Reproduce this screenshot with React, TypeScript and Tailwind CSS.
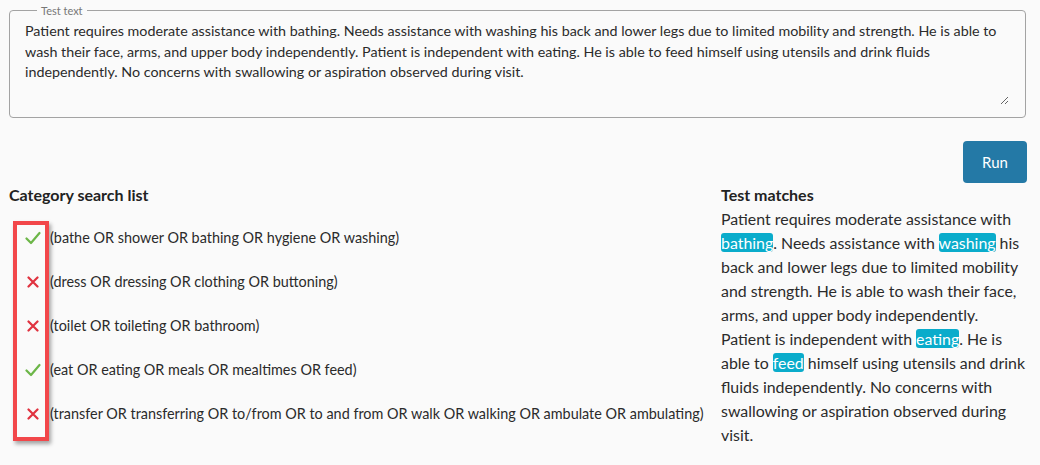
import { useState } from "react";

const SAMPLE =
  "Patient requires moderate assistance with bathing. Needs assistance with washing his back and lower legs due to limited mobility and strength. He is able to wash their face, arms, and upper body independently. Patient is independent with eating. He is able to feed himself using utensils and drink fluids independently. No concerns with swallowing or aspiration observed during visit.";

const categories = [
  { query: "(bathe OR shower OR bathing OR hygiene OR washing)", matched: true },
  { query: "(dress OR dressing OR clothing OR buttoning)", matched: false },
  { query: "(toilet OR toileting OR bathroom)", matched: false },
  { query: "(eat OR eating OR meals OR mealtimes OR feed)", matched: true },
  {
    query:
      "(transfer OR transferring OR to/from OR to and from OR walk OR walking OR ambulate OR ambulating)",
    matched: false,
  },
];

const highlightWords = ["bathing", "washing", "eating", "feed"];

function CheckIcon() {
  return (
    <svg width="16" height="14" viewBox="0 0 16 14" fill="none">
      <path d="M1.5 7.5 L6 12 L14.5 2" stroke="#6cb648" strokeWidth="2.2" strokeLinecap="round" strokeLinejoin="round" />
    </svg>
  );
}

function CrossIcon() {
  return (
    <svg width="12" height="12" viewBox="0 0 12 12" fill="none">
      <path d="M1.5 1.5 L10.5 10.5 M10.5 1.5 L1.5 10.5" stroke="#e0323f" strokeWidth="2.2" strokeLinecap="round" />
    </svg>
  );
}

function Highlighted({ text }: { text: string }) {
  // split on whole words that were matched
  const re = new RegExp(`\\b(${highlightWords.join("|")})\\b`, "g");
  const parts = text.split(re);
  return (
    <>
      {parts.map((part, i) =>
        highlightWords.includes(part) ? (
          <mark key={i} className="bg-[#0aaccb] text-white rounded-[3px]">
            {part}
          </mark>
        ) : (
          <span key={i}>{part}</span>
        )
      )}
    </>
  );
}

export default function App() {
  const [text, setText] = useState(SAMPLE);

  return (
    <div
      className="min-h-[465px] bg-[#fafafa] text-[#2b2b2b] pl-[9px] pr-[14px] pt-[4px]"
      style={{ fontFamily: "Lato, 'Open Sans', sans-serif" }}
    >
      {/* Test text input */}
      <fieldset className="rounded-[4px] border border-[#a3a3a3] pl-[15px] pr-[16px] pb-[12px]">
        <legend className="ml-[12px] px-[4px] text-[11px] leading-[13px] text-[#777]">Test text</legend>
        <textarea
          value={text}
          onChange={(e) => setText(e.target.value)}
          className="block w-full h-[84px] mt-[4px] resize-y bg-transparent outline-none text-[14.3px] leading-[20.5px] text-[#2b2b2b]"
        />
      </fieldset>

      <div className="flex justify-end mt-[23px]">
        <button className="w-[64px] h-[42px] mr-[-1px] rounded-[4px] bg-[#2479a6] text-white text-[15px]">Run</button>
      </div>

      <div className="flex">
        {/* Category list */}
        <div className="w-[712px] shrink-0">
          <h3 className="font-bold text-[16px] leading-[24px] text-[#222]">Category search list</h3>
          <div className="relative pt-[9px]">
            <ul>
              {categories.map((c) => (
                <li key={c.query} className="flex items-center h-[44px] text-[14.4px]">
                  <span className="w-[16px] ml-[16px] mr-[9px] flex justify-center">
                    {c.matched ? <CheckIcon /> : <CrossIcon />}
                  </span>
                  <span>{c.query}</span>
                </li>
              ))}
            </ul>
            <div className="absolute left-[4px] top-[14px] w-[36px] h-[220px] border-[4px] border-[#f2474a] shadow-[2px_3px_4px_rgba(0,0,0,0.35)]" />
          </div>
        </div>

        {/* Matches */}
        <div className="w-[309px] shrink-0">
          <h3 className="font-bold text-[16px] leading-[24px] text-[#222]">Test matches</h3>
          <p className="text-[15.9px] leading-[24px]">
            <Highlighted text={SAMPLE} />
          </p>
        </div>
      </div>
    </div>
  );
}
